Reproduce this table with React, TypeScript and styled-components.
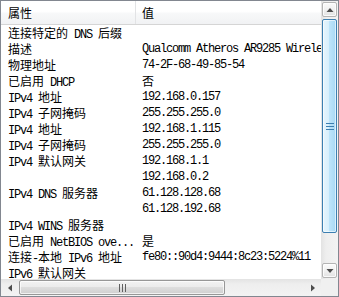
import React from "react";
import styled, { createGlobalStyle } from "styled-components";

const GlobalStyle = createGlobalStyle`
  html, body {
    margin: 0;
    padding: 0;
    background: #ffffff;
  }
`;

const Frame = styled.div`
  width: 339px;
  height: 297px;
  box-sizing: border-box;
  border: 1px solid #828790;
  display: grid;
  grid-template-columns: 320px 17px;
  grid-template-rows: 278px 17px;
  background: #ffffff;
  font-family: "Liberation Mono", "Noto Sans CJK SC", monospace;
  font-size: 12px;
  color: #000;
`;

const List = styled.div`
  overflow: hidden;
  display: flex;
  flex-direction: column;
`;

const Header = styled.div`
  display: grid;
  grid-template-columns: 134px 1fr;
  height: 23px;
  flex-shrink: 0;
  background: linear-gradient(to bottom, #ffffff 0%, #ffffff 45%, #f7f8f9 55%, #f1f2f4 100%);
  border-bottom: 1px solid #d5d5d5;
`;

const HeaderCell = styled.div<{ $divider?: boolean }>`
  display: flex;
  align-items: center;
  padding-left: ${(p) => (p.$divider ? "6px" : "7px")};
  border-left: ${(p) => (p.$divider ? "1px solid #e2e3e5" : "none")};
  font-family: "Noto Sans CJK SC", sans-serif;
  font-size: 12px;
`;

const Row = styled.div`
  display: grid;
  grid-template-columns: 134px 1fr;
  height: 16px;
  flex-shrink: 0;
  white-space: nowrap;
`;

const Cell = styled.div`
  height: 16px;
  line-height: 16px;
  padding-left: 7px;
  letter-spacing: -1.2px;
  overflow: hidden;
`;

const Cjk = styled.span`
  font-family: "Noto Sans CJK SC", sans-serif;
  letter-spacing: 0;
`;

const VScroll = styled.div`
  display: flex;
  flex-direction: column;
  background: linear-gradient(to right, #e3e3e3 0%, #eeeeee 30%, #f3f3f3 100%);
`;

const HScroll = styled.div`
  display: flex;
  align-items: stretch;
  background: linear-gradient(to bottom, #e3e3e3 0%, #eeeeee 30%, #f3f3f3 100%);
`;

const Corner = styled.div`
  background: #f0f0f0;
`;

const ArrowBox = styled.div<{ $boxed?: boolean }>`
  width: 17px;
  height: 17px;
  flex-shrink: 0;
  box-sizing: border-box;
  padding: 1px;
  display: flex;

  & > span {
    flex: 1;
    display: flex;
    align-items: center;
    justify-content: center;
    border-radius: 2px;
    border: 1px solid ${(p) => (p.$boxed ? "#b4b4b4" : "transparent")};
    background: ${(p) =>
      p.$boxed ? "linear-gradient(to bottom, #fbfbfb, #f1f1f1 50%, #e2e2e2)" : "transparent"};
    box-shadow: ${(p) => (p.$boxed ? "inset 0 0 0 1px rgba(255,255,255,0.8)" : "none")};
  }
`;

const Track = styled.div<{ $vertical?: boolean }>`
  flex: 1;
  display: flex;
  flex-direction: ${(p) => (p.$vertical ? "column" : "row")};
  padding: 1px;
`;

const VThumb = styled.div`
  height: 214px;
  box-sizing: border-box;
  border: 1px solid #3c7fb1;
  border-radius: 2px;
  background: linear-gradient(to right, #e6f5fd 0%, #d7effc 45%, #bce4fa 50%, #a8d9f4 100%);
  box-shadow: inset 0 0 0 1px rgba(255, 255, 255, 0.6);
  display: flex;
  align-items: center;
  justify-content: center;
`;

const HThumb = styled.div`
  width: 206px;
  box-sizing: border-box;
  border: 1px solid #979797;
  border-radius: 2px;
  background: linear-gradient(to bottom, #f2f2f2 0%, #ebebeb 45%, #dddddd 50%, #cfcfcf 100%);
  box-shadow: inset 0 0 0 1px rgba(255, 255, 255, 0.7);
  display: flex;
  align-items: center;
  justify-content: center;
`;

const Arrow = ({ dir }: { dir: "up" | "down" | "left" | "right" }) => {
  const pts = {
    up: "0.5,5 4,1 7.5,5",
    down: "0.5,1 4,5 7.5,1",
    left: "5,0.5 1,4 5,7.5",
    right: "1,0.5 5,4 1,7.5",
  }[dir];
  const horiz = dir === "left" || dir === "right";
  return (
    <svg width={horiz ? 6 : 8} height={horiz ? 8 : 6} viewBox={horiz ? "0 0 6 8" : "0 0 8 6"}>
      <polygon points={pts} fill="#4d4d4d" />
    </svg>
  );
};

const Gripper = ({ vertical }: { vertical?: boolean }) =>
  vertical ? (
    <svg width="8" height="7" viewBox="0 0 8 7">
      <rect x="0" y="0" width="8" height="1" fill="#3c7fb1" />
      <rect x="0" y="3" width="8" height="1" fill="#3c7fb1" />
      <rect x="0" y="6" width="8" height="1" fill="#3c7fb1" />
    </svg>
  ) : (
    <svg width="7" height="8" viewBox="0 0 7 8">
      <rect x="0" y="0" width="1" height="8" fill="#606060" />
      <rect x="3" y="0" width="1" height="8" fill="#606060" />
      <rect x="6" y="0" width="1" height="8" fill="#606060" />
    </svg>
  );

// CJK runs get the CJK face at full width, the rest stays in the narrow mono face
const mixed = (s: string) =>
  s
    .split(/([\u2e80-\u9fff\uff00-\uffef]+)/)
    .filter(Boolean)
    .map((part, i) =>
      /[\u2e80-\u9fff\uff00-\uffef]/.test(part) ? <Cjk key={i}>{part}</Cjk> : part
    );

const rows: [string, string][] = [
  ["连接特定的 DNS 后缀", ""],
  ["描述", "Qualcomm Atheros AR9285 Wireless Network Adapter"],
  ["物理地址", "74-2F-68-49-85-54"],
  ["已启用 DHCP", "否"],
  ["IPv4 地址", "192.168.0.157"],
  ["IPv4 子网掩码", "255.255.255.0"],
  ["IPv4 地址", "192.168.1.115"],
  ["IPv4 子网掩码", "255.255.255.0"],
  ["IPv4 默认网关", "192.168.1.1"],
  ["", "192.168.0.2"],
  ["IPv4 DNS 服务器", "61.128.128.68"],
  ["", "61.128.192.68"],
  ["IPv4 WINS 服务器", ""],
  ["已启用 NetBIOS ove...", "是"],
  ["连接-本地 IPv6 地址", "fe80::90d4:9444:8c23:5224%11"],
  ["IPv6 默认网关", ""],
];

const App = () => (
  <>
    <GlobalStyle />
    <Frame>
      <List>
        <Header>
          <HeaderCell>属性</HeaderCell>
          <HeaderCell $divider>值</HeaderCell>
        </Header>
        {rows.map(([name, value], i) => (
          <Row key={i}>
            <Cell>{mixed(name)}</Cell>
            <Cell>{mixed(value)}</Cell>
          </Row>
        ))}
      </List>
      <VScroll>
        <ArrowBox $boxed>
          <span>
            <Arrow dir="up" />
          </span>
        </ArrowBox>
        <Track $vertical>
          <VThumb>
            <Gripper vertical />
          </VThumb>
        </Track>
        <ArrowBox $boxed>
          <span>
            <Arrow dir="down" />
          </span>
        </ArrowBox>
      </VScroll>
      <HScroll>
        <ArrowBox>
          <span>
            <Arrow dir="left" />
          </span>
        </ArrowBox>
        <Track>
          <HThumb>
            <Gripper />
          </HThumb>
        </Track>
        <ArrowBox>
          <span>
            <Arrow dir="right" />
          </span>
        </ArrowBox>
      </HScroll>
      <Corner />
    </Frame>
  </>
);

export default App;
